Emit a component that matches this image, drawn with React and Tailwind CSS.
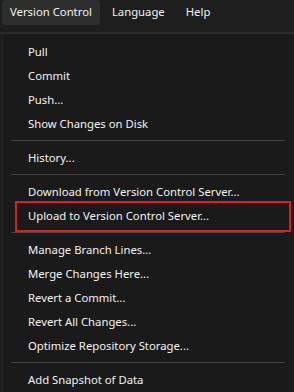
import React from "react";

const font = { fontFamily: '"Noto Sans", "Open Sans", sans-serif' };

function Item({ children }) {
  return (
    <div className="h-[24px] flex items-center pl-[25px] text-[11.3px] text-[#f2f2f2] whitespace-nowrap">
      {children}
    </div>
  );
}

function Sep() {
  return <div className="mt-[4px] mb-[5px] mx-[8px] h-px bg-[#454545]" />;
}

export default function App() {
  return (
    <div className="w-[294px] h-[392px] bg-[#1e1e1e] overflow-hidden flex flex-col" style={font}>
      <div className="h-[33px] flex items-start pl-[2px] text-[11.3px] text-[#f2f2f2]">
        <div className="h-[25px] px-[8px] flex items-center rounded-[4px] bg-[#2e2e2e]">Version Control</div>
        <div className="h-[25px] ml-[12px] flex items-center">Language</div>
        <div className="h-[25px] ml-[21px] flex items-center">Help</div>
      </div>
      <div className="h-[2px] bg-[#2b2b2b]" />
      <div className="flex-1 ml-[2px] mr-[1px] bg-[#1a1a1a] border-l border-[#222] pt-[6px] flex flex-col">
        <Item>Pull</Item>
        <Item>Commit</Item>
        <Item>Push...</Item>
        <Item>Show Changes on Disk</Item>
        <Sep />
        <Item>History...</Item>
        <Sep />
        <Item>Download from Version Control Server...</Item>
        <div className="relative">
          <Item>Upload to Version Control Server...</Item>
          <div className="absolute top-[-3px] bottom-[-4px] left-[12px] right-[2px] border-2 border-[#e01c1c] pointer-events-none" />
        </div>
        <Sep />
        <Item>Manage Branch Lines...</Item>
        <Item>Merge Changes Here...</Item>
        <Item>Revert a Commit...</Item>
        <Item>Revert All Changes...</Item>
        <Item>Optimize Repository Storage...</Item>
        <Sep />
        <Item>Add Snapshot of Data</Item>
      </div>
    </div>
  );
}
